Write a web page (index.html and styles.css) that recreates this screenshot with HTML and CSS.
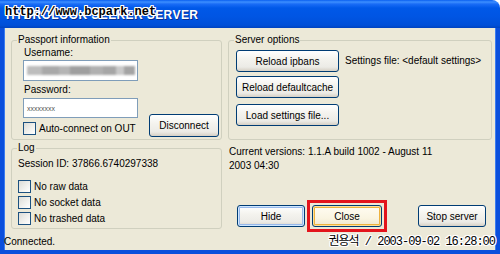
FILE: index.html
```html
<!DOCTYPE html>
<html lang="ko">
<head>
    <meta charset="UTF-8">
    <title>Server</title>
    <link rel="stylesheet" href="styles.css">
</head>
<body>
    <div class="window">
        <div class="titlebar">
            <span class="title">HYDROLOOK SEEKER SERVER</span>
            <span class="mark-url">http://www.bcpark.net</span>
        </div>
        <div class="client">
            <div class="main">
                <fieldset class="group passport">
                    <legend>Passport information</legend>
                    <div class="passport-body">
                        <div class="login">
                            <span class="label">Username:</span>
                            <div class="textbox"><div class="blurred"></div></div>
                            <span class="label pw">Password:</span>
                            <div class="textbox pwbox"><span class="stars">xxxxxxxx</span></div>
                            <label class="check first"><span class="box"></span>Auto-connect on OUT</label>
                        </div>
                        <button class="btn disconnect">Disconnect</button>
                    </div>
                </fieldset>

                <fieldset class="group server">
                    <legend>Server options</legend>
                    <div class="server-body">
                        <div class="server-buttons">
                            <button class="btn wide">Reload ipbans</button>
                            <button class="btn wide">Reload defaultcache</button>
                            <button class="btn wide">Load settings file...</button>
                        </div>
                        <span class="settings">Settings file: &lt;default settings&gt;</span>
                    </div>
                </fieldset>

                <fieldset class="group log">
                    <legend>Log</legend>
                    <div class="log-body">
                        <span class="session">Session ID: 37866.6740297338</span>
                        <label class="check"><span class="box"></span>No raw data</label>
                        <label class="check"><span class="box"></span>No socket data</label>
                        <label class="check"><span class="box"></span>No trashed data</label>
                    </div>
                </fieldset>

                <div class="actions">
                    <p class="versions">Current versions: 1.1.A build 1002 - August 11<br>2003 04:30</p>
                    <div class="action-row">
                        <button class="btn hide">Hide</button>
                        <span class="highlight"><button class="btn close">Close</button></span>
                        <button class="btn stop">Stop server</button>
                    </div>
                </div>
            </div>
            <div class="status">Connected.</div>
            <span class="mark-date">권용석 / 2003-09-02 16:28:00</span>
        </div>
    </div>
</body>
</html>
```

FILE: styles.css
```css
body {
    margin: 0;
    background: #fff;
    font-family: 'Liberation Sans', Arial, sans-serif;
    font-size: 10px;
    color: #000;
}
.window {
    width: 500px;
    height: 254px;
    display: flex;
    flex-direction: column;
}
.titlebar {
    position: relative;
    height: 28px;
    flex: none;
    border-top-right-radius: 8px;
    background: linear-gradient(to bottom, #0a5ff0 0, #3d8fff 2px, #1a6cf6 4px, #0058e8 8px, #0055e3 60%, #004fd8 90%, #0043c0 100%);
}
.title {
    position: absolute;
    left: 6px;
    top: 8px;
    font-weight: bold;
    font-size: 12px;
    letter-spacing: 0.4px;
    color: #fff;
    text-shadow: 1px 1px 0 #0a2f8f;
}
.mark-url {
    position: absolute;
    left: 5px;
    top: 5px;
    font-family: 'Liberation Mono', monospace;
    font-weight: bold;
    font-size: 12px;
    color: #000;
    text-shadow: -1px 0 #fff, 1px 0 #fff, 0 -1px #fff, 0 1px #fff, 1px 1px #fff, -1px -1px #fff, 1px -1px #fff, -1px 1px #fff;
}
.client {
    position: relative;
    flex: 1;
    display: flex;
    flex-direction: column;
    background: #ece9d8;
    border: 4px solid #0a4fdc;
    border-top: 0;
    box-shadow: inset 1px 0 #3a7cf0, inset -1px 0 #3a7cf0;
}
.main {
    display: grid;
    grid-template-columns: 211px 264px;
    grid-template-rows: 106px 87px;
    column-gap: 6px;
    row-gap: 2px;
    padding: 6px 0 0 7px;
}
.group {
    margin: 0;
    padding: 0;
    border: 1px solid #d0d0bf;
    border-radius: 3px;
    min-width: 0;
}
.group legend {
    margin-left: 5px;
    padding: 0 1px;
    line-height: 12px;
}
.label {
    display: block;
    line-height: 12px;
    margin-left: 1px;
}
.passport-body {
    display: flex;
    align-items: flex-end;
    padding: 1px 0 0 11px;
}
.login {
    width: 115px;
    display: flex;
    flex-direction: column;
}
.textbox {
    height: 19px;
    margin-top: 1px;
    background: #fff;
    border: 1px solid #7f9db9;
    display: flex;
    align-items: center;
    padding-left: 3px;
}
.label.pw {
    margin-top: 3px;
}
.pwbox {
    height: 18px;
    margin-top: 2px;
}
.blurred {
    width: 108px;
    height: 9px;
    filter: blur(1px);
    background: linear-gradient(90deg, #bdbdbd 0 14%, #a9a9a9 14% 30%, #b5b5b5 30% 40%, #9f9f9f 40% 58%, #b0b0b0 58% 70%, #a6a6a6 70% 82%, #c9c9c9 82% 90%, #a4a4a4 90% 100%);
}
.stars {
    font-size: 7px;
    color: #555;
    line-height: 7px;
}
.check {
    display: flex;
    align-items: center;
    height: 13px;
    margin-top: 3px;
    line-height: 13px;
}
.check.first {
    margin-top: 4px;
    margin-bottom: 3px;
}
.box {
    width: 11px;
    height: 11px;
    margin-right: 3px;
    border: 1px solid #1c5180;
    background: linear-gradient(135deg, #dcdcd7 0%, #f2f2ef 60%, #fff 100%);
    flex: none;
}
.btn {
    font-family: inherit;
    font-size: 10px;
    color: #000;
    height: 22px;
    padding: 0;
    border: 1px solid #003c74;
    border-radius: 3px;
    background: linear-gradient(to bottom, #fff 0%, #f4f3ee 40%, #ecebe6 80%, #d6d0c5 100%);
}
.disconnect {
    width: 70px;
    height: 23px;
    margin: 0 0 1px 11px;
}
.server-body {
    display: flex;
    align-items: flex-start;
    padding: 4px 0 0 7px;
}
.server-buttons {
    display: flex;
    flex-direction: column;
    gap: 4px;
}
.server-buttons .btn:last-child {
    margin-top: 2px;
}
.wide {
    width: 103px;
}
.settings {
    margin: 5px 0 0 6px;
    line-height: 12px;
}
.log-body {
    display: flex;
    flex-direction: column;
    padding: 4px 0 0 6px;
}
.session {
    line-height: 12px;
    margin-bottom: 7px;
}
.actions {
    display: flex;
    flex-direction: column;
}
.versions {
    margin: 3px 0 0 1px;
    line-height: 14px;
}
.action-row {
    display: flex;
    align-items: center;
    margin-top: auto;
    padding: 0 0 2px 9px;
}
.hide {
    width: 68px;
    box-shadow: inset 0 0 0 1px #cee7ff, inset 0 0 0 2px #98b8ea;
}
.highlight {
    display: flex;
    margin: -5px 0 -5px 2px;
    padding: 2px;
    border: 3px solid #e3141c;
}
.close {
    width: 70px;
    background: linear-gradient(to bottom, #fffcf2 0%, #faf5e2 60%, #efe7cc 100%);
    box-shadow: inset 0 0 0 1px #fce19a, inset 0 0 0 2px #eeb23e;
}
.stop {
    width: 68px;
    margin-left: 31px;
}
.status {
    margin-top: auto;
    line-height: 14px;
    padding-bottom: 1px;
}
.mark-date {
    position: absolute;
    right: 1px;
    bottom: 0;
    line-height: 15px;
    font-family: 'Liberation Mono', 'Noto Sans CJK KR', monospace;
    font-size: 12px;
    letter-spacing: -1px;
    color: #000;
    text-shadow: -1px 0 #fff, 1px 0 #fff, 0 -1px #fff, 0 1px #fff, 1px 1px #fff, -1px -1px #fff, 1px -1px #fff, -1px 1px #fff;
}
```
